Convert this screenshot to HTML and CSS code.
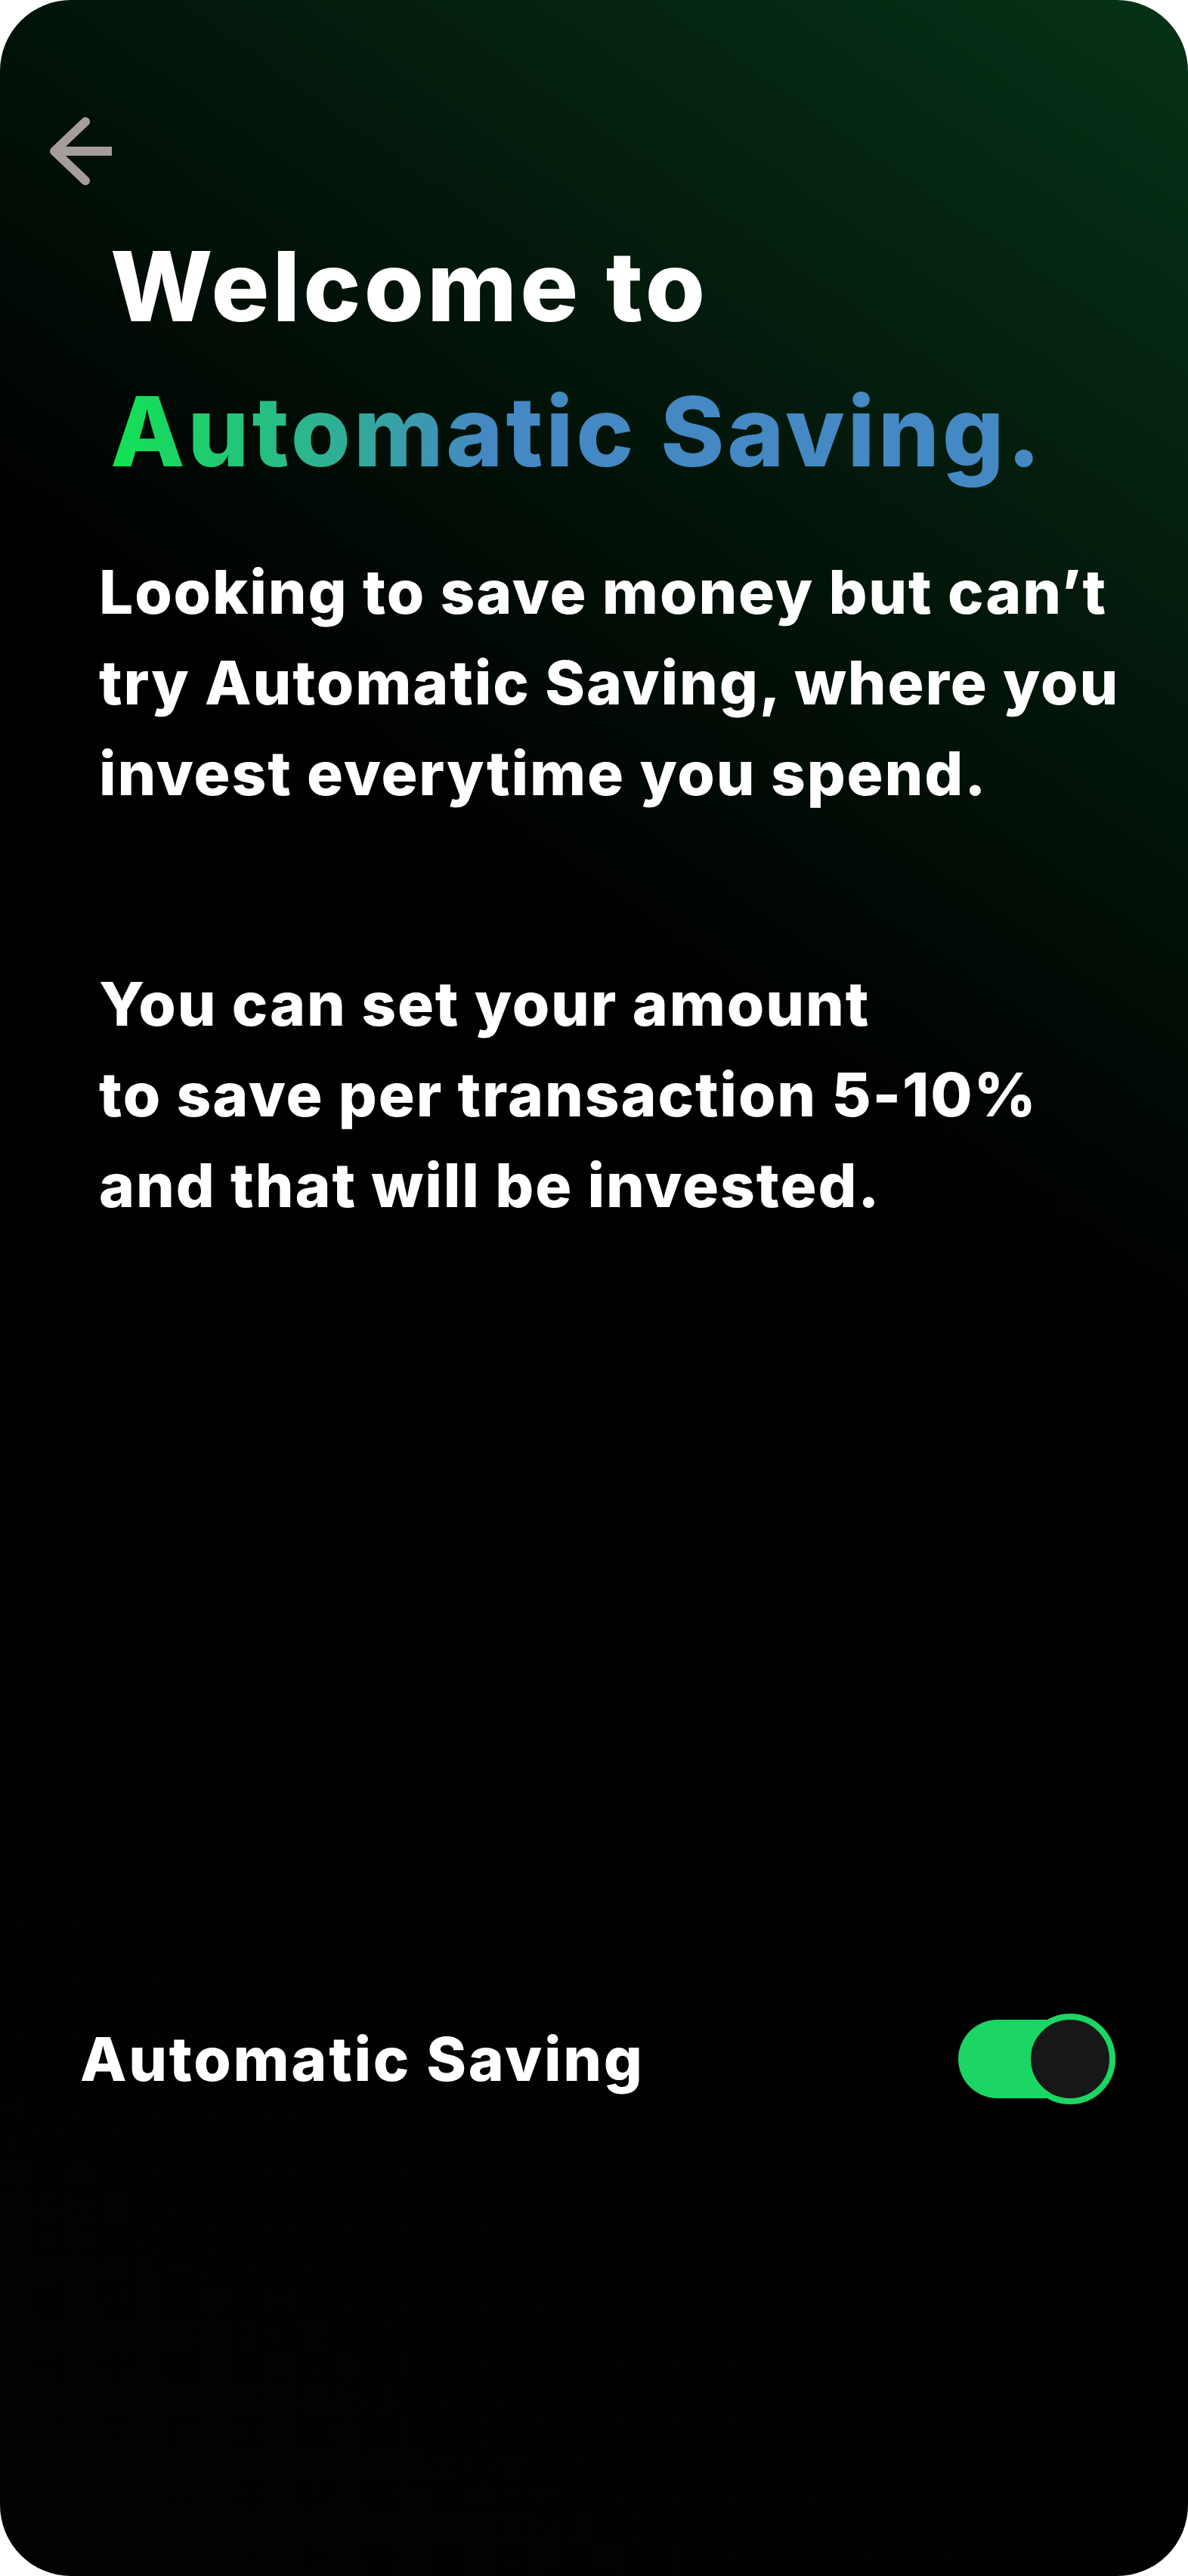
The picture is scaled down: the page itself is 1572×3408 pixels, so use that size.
FILE: index.html
```html
<!DOCTYPE html>
<html lang="en">
<head>
<meta charset="utf-8">
<title>Automatic Saving</title>
<link rel="stylesheet" href="styles.css">
</head>
<body>
<main class="screen">
  <header class="topbar">
    <button class="back" aria-label="Back">
      <svg width="100" height="100" viewBox="0 0 100 100" aria-hidden="true">
        <path d="M57 11 L16 50 L57 89" fill="none" stroke="#a59d9d" stroke-width="12" stroke-linecap="round" stroke-linejoin="round"/>
        <path d="M18 50 H92" fill="none" stroke="#a59d9d" stroke-width="12" stroke-linecap="butt"/>
      </svg>
    </button>
  </header>

  <h1 class="title">
    <span class="title-line">Welcome to</span>
    <span class="title-line"><span class="grad">Automatic Saving.</span></span>
  </h1>

  <p class="copy">Looking to save money but can’t<br>try Automatic Saving, where you<br>invest everytime you spend.</p>
  <p class="copy copy-second">You can set your amount<br>to save per transaction 5-10%<br>and that will be invested.</p>

  <div class="setting">
    <span class="setting-label">Automatic Saving</span>
    <span class="switch" role="switch" aria-checked="true">
      <span class="track"></span>
      <span class="knob"></span>
    </span>
  </div>
</main>
</body>
</html>
```

FILE: styles.css
```css
* { box-sizing: border-box; }

html, body {
  margin: 0;
  padding: 0;
  background: #ffffff;
}

body {
  font-family: Inter, "Noto Sans", "Liberation Sans", sans-serif;
  color: #ffffff;
}

.screen {
  width: 1572px;
  height: 3408px;
  border-radius: 94px;
  overflow: hidden;
  background: linear-gradient(215deg, #063317 0%, #000000 40%, #020202 100%);
  display: flex;
  flex-direction: column;
}

.topbar {
  padding: 150px 0 0 56px;
  display: flex;
}

.back {
  width: 100px;
  height: 100px;
  padding: 0;
  border: 0;
  background: none;
  display: block;
}

.back svg { display: block; }

.title {
  margin: 33px 0 0 0;
  padding-left: 146px;
  font-size: 128px;
  line-height: 192px;
  font-weight: 800;
  letter-spacing: 4.3px;
}

.title-line { display: block; white-space: nowrap; }

.title-line + .title-line { letter-spacing: 3.8px; }

.grad {
  background: linear-gradient(90deg, #12e352 0%, #2ab88a 20%, #4489c3 40%, #4489c3 100%);
  -webkit-background-clip: text;
  background-clip: text;
  color: transparent;
}

.copy {
  margin: 56px 0 0 0;
  padding-left: 131px;
  font-size: 80px;
  line-height: 120px;
  font-weight: 800;
  letter-spacing: 1.9px;
  white-space: nowrap;
}

.copy-second { margin-top: 185px; }

.setting {
  margin-top: 1036px;
  padding: 0 96px 0 106px;
  display: flex;
  align-items: center;
  justify-content: space-between;
  height: 120px;
}

.setting-label {
  font-size: 80px;
  line-height: 120px;
  font-weight: 800;
  letter-spacing: 2.7px;
  white-space: nowrap;
}

.switch {
  display: flex;
  align-items: center;
}

.track {
  width: 192px;
  height: 104px;
  border-radius: 52px;
  background: #1bd664;
}

.knob {
  width: 120px;
  height: 120px;
  margin-left: -104px;
  border-radius: 50%;
  background: #171717;
  border: 8px solid #1bd664;
}
```
